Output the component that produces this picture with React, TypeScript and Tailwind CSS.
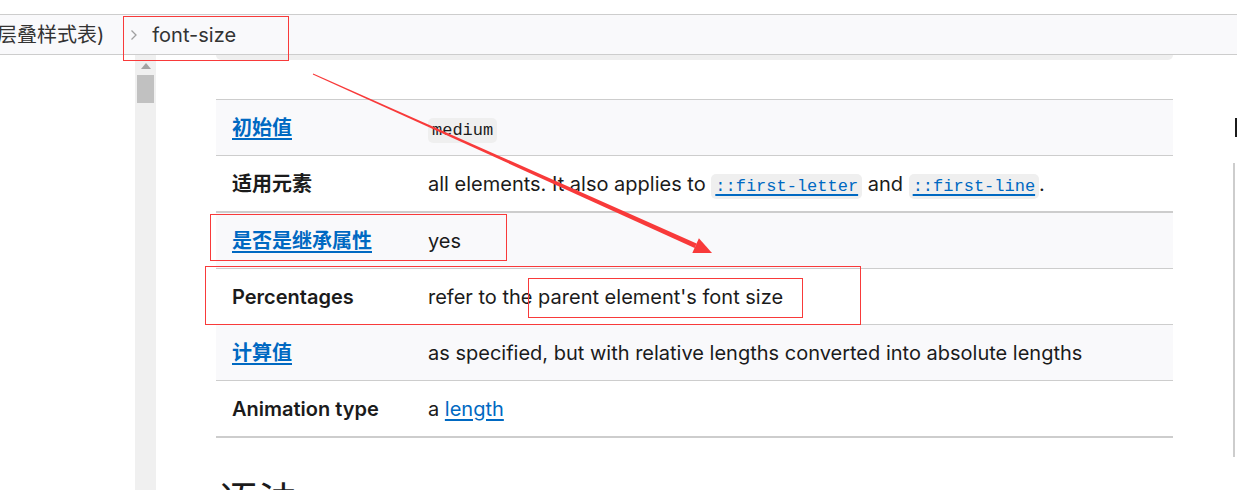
const sans = "font-['Inter','Noto_Sans_CJK_SC',sans-serif]"

function Code({ children, link = false }: { children: React.ReactNode; link?: boolean }) {
  return (
    <code
      className={`font-['Liberation_Mono',monospace] text-[17px] leading-[25px] inline-block rounded-[5px] bg-[#efefef] px-[4px] ${
        link ? 'text-[#0069c2] underline decoration-[1.5px] underline-offset-[3px]' : 'text-[#1b1b1b]'
      }`}
    >
      {children}
    </code>
  )
}

function Link({ children, bold = false }: { children: React.ReactNode; bold?: boolean }) {
  return (
    <a className={`text-[#0069c2] underline decoration-[2px] underline-offset-[3px] ${bold ? 'font-semibold' : ''}`}>
      {children}
    </a>
  )
}

interface RowProps {
  label: React.ReactNode
  value: React.ReactNode
  shade?: boolean
  className: string
}

function Row({ label, value, shade = false, className }: RowProps) {
  return (
    <div className={`flex items-center border-b border-[#cdcdcd] ${shade ? 'bg-[#f9f9fb]' : 'bg-white'} ${className}`}>
      <div className="w-[212px] pl-4 font-semibold">{label}</div>
      <div className="flex-1">{value}</div>
    </div>
  )
}

function Annotations() {
  // tapered red arrow + highlight boxes drawn over the page
  const sx = 313, sy = 74, tx = 712, ty = 253
  const dx = tx - sx, dy = ty - sy
  const len = Math.hypot(dx, dy)
  const ux = dx / len, uy = dy / len
  const px = -uy, py = ux
  const bx = tx - ux * 18, by = ty - uy * 18
  const pt = (x: number, y: number) => `${x.toFixed(1)},${y.toFixed(1)}`
  const shaft = [
    pt(sx + px * 0.5, sy + py * 0.5),
    pt(bx + px * 2.5, by + py * 2.5),
    pt(bx - px * 2.5, by - py * 2.5),
    pt(sx - px * 0.5, sy - py * 0.5),
  ].join(' ')
  const head = [pt(tx, ty), pt(bx + px * 8, by + py * 8), pt(bx - px * 8, by - py * 8)].join(' ')
  return (
    <svg className="absolute inset-0 pointer-events-none" width="1237" height="490">
      <g fill="none" stroke="#f83a3a" strokeWidth="1">
        <rect x="123.5" y="16.5" width="165" height="44" />
        <rect x="210.5" y="214.5" width="296" height="46" />
        <rect x="205.5" y="266.5" width="655" height="58" />
        <rect x="528.5" y="278.5" width="274" height="39" />
      </g>
      <polygon points={shaft} fill="#f83a3a" />
      <polygon points={head} fill="#f83a3a" />
    </svg>
  )
}

export default function App() {
  return (
    <div className={`relative w-[1237px] h-[490px] overflow-hidden bg-white text-[#1b1b1b] text-[20px] flex flex-col ${sans}`}>
      <div className="h-[14px] shrink-0" />

      <div className="h-[41px] shrink-0 flex items-center border-y border-[#cdcdcd] bg-[#f9f9fb] text-[#333]">
        <span className="-ml-[3px] whitespace-nowrap">层叠样式表)</span>
        <svg className="ml-[26px]" width="8" height="12" viewBox="0 0 8 12">
          <polyline points="1.5,1.5 6,6 1.5,10.5" fill="none" stroke="#a0a0a0" strokeWidth="1.3" />
        </svg>
        <span className="ml-[14px]">font-size</span>
      </div>

      <div className="flex flex-1 min-h-0">
        <div className="w-[135px] shrink-0" />

        <div className="w-[21px] shrink-0 bg-[#f0f0f0] flex flex-col items-center">
          <svg className="mt-[8px]" width="10" height="6" viewBox="0 0 10 6">
            <polygon points="5,0 10,6 0,6" fill="#a3a3a3" />
          </svg>
          <div className="mt-[6px] w-[17px] h-[28px] bg-[#c1c1c1]" />
        </div>

        <div className="w-[60px] shrink-0" />

        <div className="w-[957px] shrink-0">
          <div className="h-[5px] rounded-b-[6px] bg-[#efefef]" />

          <div className="mt-[39px] border-t border-[#cdcdcd]">
            <Row shade className="h-[56px]" label={<Link bold>初始值</Link>} value={<Code>medium</Code>} />
            <Row
              className="h-[57px] border-b-2"
              label="适用元素"
              value={
                <span>
                  all elements. It also applies to <Code link>::first-letter</Code> and{' '}
                  <Code link>::first-line</Code>.
                </span>
              }
            />
            <Row shade className="h-[56px]" label={<Link bold>是否是继承属性</Link>} value="yes" />
            <Row className="h-[56px]" label="Percentages" value="refer to the parent element's font size" />
            <Row
              shade
              className="h-[56px]"
              label={<Link bold>计算值</Link>}
              value="as specified, but with relative lengths converted into absolute lengths"
            />
            <Row
              className="h-[57px] border-b-2"
              label="Animation type"
              value={
                <span>
                  a <Link>length</Link>
                </span>
              }
            />
          </div>

          <h2 className="mt-[40px] ml-[2px] text-[40px] leading-[48px] font-normal text-[#1b1b1b]">语法</h2>
        </div>

        <div className="w-[60px] shrink-0" />

        <div className="w-[4px] shrink-0 flex flex-col">
          <div className="mt-[63px] h-[19px] pl-[2px]">
            <div className="w-[2px] h-[19px] bg-[#1b1b1b]" />
          </div>
          <div className="mt-[26px] h-[294px] border-l-2 border-[#cdcdcd]" />
        </div>
      </div>

      <Annotations />
    </div>
  )
}
